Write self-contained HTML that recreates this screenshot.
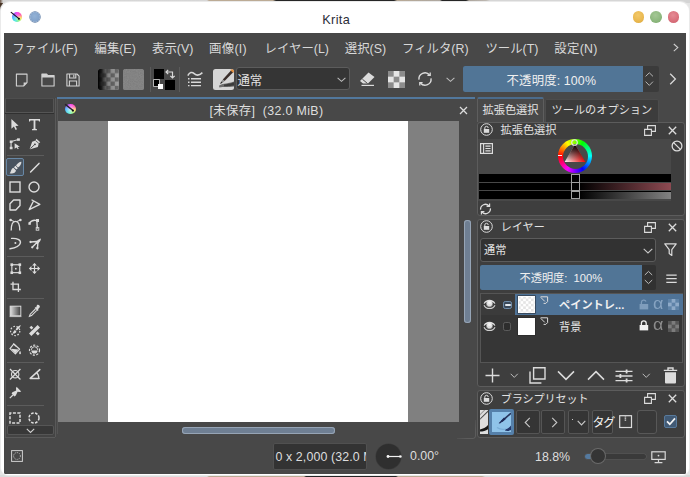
<!DOCTYPE html>
<html lang="ja">
<head>
<meta charset="utf-8">
<title>Krita</title>
<style>
html,body{margin:0;padding:0;}
body{width:690px;height:477px;overflow:hidden;background:#e4e4e4;font-family:"Liberation Sans","Noto Sans CJK JP",sans-serif;font-size:13px;color:#dcdcdc;}
#root{position:relative;width:690px;height:477px;overflow:hidden;}
.abs{position:absolute;}
.t{position:absolute;white-space:nowrap;line-height:16px;height:16px;}
svg{position:absolute;overflow:visible;}
#win{position:absolute;left:1.2px;top:2px;width:687.4px;height:473.4px;background:#fff;border-radius:9px 9px 7px 7px;box-shadow:0 0 .8px .4px #ececec;}
#app{position:absolute;left:4px;top:33px;width:682px;height:440.7px;background:#484848;border-radius:0 0 1.5px 1.5px;}
.mi{top:40.5px;font-size:12.4px;color:#d8d8d8;}
.field{position:absolute;background:#353535;border:1px solid #5c5c5c;border-radius:3px;box-sizing:border-box;}
.blue{position:absolute;background:#517596;}
.panel{position:absolute;border:1px solid #5c5c5c;border-radius:3px;box-sizing:border-box;background:#3e3e3e;}
</style>
</head>
<body>
<div id="root">
<!-- background bleed strips -->
<div class="abs" style="left:0;top:0;width:690px;height:3px;background:linear-gradient(90deg,#6a5546 0,#d6d6d6 3px,#d4d4d4 207px,#b9a68f 209px,#b9a68f 273px,#161616 276px,#161616 394px,#b5a590 397px,#a9a29a 440px,#161616 442px,#161616 466px,#a8a097 469px,#b9b3ac 486px,#d4d4d4 490px,#d4d4d4 690px);"></div>
<div class="abs" style="left:0;top:3px;width:3px;height:10px;background:linear-gradient(180deg,#4a3526,#3a2a20 60%,#8a8078);"></div>
<div class="abs" style="left:0;top:475px;width:690px;height:2px;background:linear-gradient(90deg,#dcdcdc 0,#dcdcdc 207px,#b9a68f 209px,#b9a68f 304px,#161616 306px,#161616 396px,#b9a68f 398px,#b9a68f 482px,#d8d8d8 485px,#d8d8d8 690px);"></div>
<div class="abs" style="left:0;top:1.4px;width:690px;height:474.4px;background:#cdcdcd;border-radius:10px 10px 8px 8px;"></div>
<div id="win"></div>

<!-- title bar -->
<div class="abs" style="left:11.8px;top:12px;width:10px;height:10px;border-radius:50%;background:radial-gradient(circle at 50% 55%,rgba(255,255,255,.45) 0,rgba(255,255,255,0) 70%),conic-gradient(from 0deg,#f838f0 0,#ff5aa8 60deg,#ffe35a 105deg,#8cf06a 150deg,#3fe8d8 200deg,#3fb4ff 265deg,#8a5cf0 315deg,#f838f0 360deg);"></div>
<svg style="left:10px;top:11px" width="12" height="10" viewBox="0 0 12 10"><path d="M1.2 1.4 L8.6 7.4" stroke="#1a1424" stroke-width="1.2" stroke-linecap="round"/><circle cx="8.9" cy="7.8" r="1.05" fill="#0c0c14"/></svg>
<div class="abs" style="left:29.6px;top:11.7px;width:10.4px;height:10.4px;border-radius:50%;background:radial-gradient(circle at 45% 40%,#93b2d6 0,#85a5cc 55%,#7494bd 100%);box-shadow:0 0 0 .7px #5f7ea6;"></div>
<div class="t" style="left:322.2px;top:11.8px;font-size:12.7px;letter-spacing:.38px;color:#2a2d38;">Krita</div>
<div class="abs" style="left:632.7px;top:11.2px;width:11.6px;height:11.6px;border-radius:50%;background:radial-gradient(circle at 45% 35%,#f3c96a 0,#e9b84f 60%,#d9a53c 100%);"></div>
<div class="abs" style="left:650.2px;top:11.2px;width:11.6px;height:11.6px;border-radius:50%;background:radial-gradient(circle at 45% 35%,#a5c795 0,#8cb77d 60%,#78a66a 100%);"></div>
<div class="abs" style="left:667.7px;top:11.2px;width:11.6px;height:11.6px;border-radius:50%;background:radial-gradient(circle at 45% 35%,#e58b95 0,#d96f7b 60%,#c95d69 100%);"></div>

<div id="app"></div>

<!-- menu bar -->
<div class="t mi" style="left:12.2px;">ファイル(F)</div>
<div class="t mi" style="left:94.6px;">編集(E)</div>
<div class="t mi" style="left:152px;">表示(V)</div>
<div class="t mi" style="left:209px;letter-spacing:.3px;">画像(I)</div>
<div class="t mi" style="left:264.6px;">レイヤー(L)</div>
<div class="t mi" style="left:344.8px;">選択(S)</div>
<div class="t mi" style="left:402px;">フィルタ(R)</div>
<div class="t mi" style="left:485.4px;">ツール(T)</div>
<div class="t mi" style="left:554.3px;letter-spacing:.3px;">設定(N)</div>
<svg style="left:672px;top:43px" width="8" height="10" viewBox="0 0 8 10"><path d="M1.8 1 L5.8 4.6 L1.8 8.2" fill="none" stroke="#cfcfcf" stroke-width="1.1"/></svg>

<!--TOOLBAR-->
<!-- new doc -->
<svg style="left:15px;top:72.5px" width="13" height="14" viewBox="0 0 13 14"><path d="M1.4 1.1 H12 V9.6 L8.6 13 H1.4 Z" fill="none" stroke="#d2d2d2" stroke-width="1.1" stroke-linejoin="round"/><path d="M12 9.6 H8.6 V13 Z" fill="#d2d2d2"/></svg>
<!-- open -->
<svg style="left:40.5px;top:72.5px" width="14" height="14" viewBox="0 0 14 14"><path d="M0.9 1 H5.6 L6.8 2.6 H13.1 V13 H0.9 Z" fill="none" stroke="#d2d2d2" stroke-width="1.1" stroke-linejoin="round"/><path d="M0.9 1 H5.6 L6.8 2.6 H13.1 V4.6 H0.9 Z" fill="#d2d2d2"/></svg>
<!-- save -->
<svg style="left:65.7px;top:72.5px" width="14" height="14" viewBox="0 0 14 14"><path d="M0.9 1 H11 L13.1 3.2 V13 H0.9 Z" fill="none" stroke="#d2d2d2" stroke-width="1.1" stroke-linejoin="round"/><path d="M3.6 1 V5 H9.8 V1 M7.8 1.8 V4.2" fill="none" stroke="#d2d2d2" stroke-width="1.1"/><path d="M3.4 13 V8 H10.6 V13" fill="none" stroke="#d2d2d2" stroke-width="1.1"/></svg>
<!-- gradient swatch -->
<div class="abs" style="left:98px;top:69px;width:21px;height:21px;border-radius:2px;overflow:hidden;background:#8a8a8a;">
  <svg style="left:0;top:0" width="21" height="21" viewBox="0 0 21 21"><defs><pattern id="chk" width="8.4" height="8.4" patternUnits="userSpaceOnUse"><rect width="8.4" height="8.4" fill="#a2a2a2"/><rect width="4.2" height="4.2" fill="#6c6c6c"/><rect x="4.2" y="4.2" width="4.2" height="4.2" fill="#6c6c6c"/></pattern><linearGradient id="gb" x1="0" x2="1"><stop offset="0" stop-color="#000" stop-opacity="1"/><stop offset=".18" stop-color="#000" stop-opacity=".75"/><stop offset=".5" stop-color="#000" stop-opacity=".2"/><stop offset="1" stop-color="#000" stop-opacity="0"/></linearGradient></defs><rect width="21" height="21" fill="url(#chk)"/><rect width="21" height="21" fill="url(#gb)"/></svg>
</div>
<!-- pattern swatch -->
<div class="abs" style="left:123px;top:69px;width:21px;height:21px;border-radius:2.5px;background:#808080;overflow:hidden;"><svg style="left:0;top:0" width="21" height="21"><filter id="nz"><feTurbulence type="fractalNoise" baseFrequency="0.9" numOctaves="2" seed="3"/><feColorMatrix type="matrix" values="0 0 0 0 0.5  0 0 0 0 0.5  0 0 0 0 0.5  0.6 0.6 0 0 -0.35"/></filter><rect width="21" height="21" fill="#7e7e7e"/><rect width="21" height="21" filter="url(#nz)" opacity=".35"/></svg></div>
<div class="abs" style="left:150px;top:67px;width:1px;height:25px;background:#5a5a5a;"></div>
<!-- fg/bg -->
<div class="abs" style="left:154px;top:69px;width:10px;height:10px;background:#000;"></div>
<div class="abs" style="left:165px;top:80px;width:10px;height:10px;background:#000;"></div>
<div class="abs" style="left:154px;top:80.4px;width:5.4px;height:5.4px;background:#000;box-shadow:0 0 0 .8px #cfcfcf;"></div>
<div class="abs" style="left:157.5px;top:83.5px;width:5.5px;height:5.5px;background:#fff;"></div>
<svg style="left:165px;top:69px" width="10" height="10" viewBox="0 0 10 10"><path d="M1 3 H7.5 V9 M3.2 0.8 L1 3 L3.2 5.2 M5.3 6.8 L7.5 9 L9.7 6.8" fill="none" stroke="#d8d8d8" stroke-width="1.2"/></svg>
<div class="abs" style="left:178.5px;top:67px;width:1px;height:25px;background:#5a5a5a;"></div>
<!-- brush settings -->
<svg style="left:187px;top:70px" width="17" height="18" viewBox="0 0 17 18"><path d="M0.8 5.6 C2.6 2.2 5 1.6 7.2 3.6 S11.6 6.4 15.4 2.6" fill="none" stroke="#d8d8d8" stroke-width="1.5"/><path d="M4 8.8 H14 M4 12.2 H14 M4 15.6 H14" stroke="#d8d8d8" stroke-width="1.4"/><path d="M1 8.8 H2.5 M1 12.2 H2.5 M1 15.6 H2.5" stroke="#d8d8d8" stroke-width="1.4"/></svg>
<!-- brush preset -->
<div class="abs" style="left:213px;top:69px;width:21px;height:21px;border-radius:2.5px;background:#d6d6d6;overflow:hidden;">
  <svg style="left:0;top:0" width="21" height="21" viewBox="0 0 21 21"><path d="M6 16.8 C9 14.4 12 15.6 21 12.6 L21 17.4 C15 18.6 10 17.4 6.4 18.6 Z" fill="#6e6e6e"/><path d="M11 15.4 C14 15.2 17 14.6 21 13.2 L21 16.6 C17 17.4 14 17.2 11 17.2 Z" fill="#3c3c3c"/><path d="M18.2 1.2 L20.4 3 L11.6 12 L9.8 10.4 Z" fill="#3a2e2a"/><path d="M17.6 0.6 L21 0 L20.8 3.6 L19.8 3.6 L17.8 1.8 Z" fill="#e08c3c"/><path d="M9.8 10.4 L11.6 12 L9.6 13.8 L8.2 12.6 Z" fill="#8a8a8a"/><path d="M8.2 12.6 L9.6 13.8 L7 15 Z" fill="#2a2a2a"/></svg>
</div>
<div class="field" style="left:236.4px;top:67.2px;width:114px;height:23.2px;"></div>
<div class="t" style="left:237.4px;top:72.7px;font-size:12.4px;color:#e2e2e2;">通常</div>
<svg style="left:337.3px;top:76.9px" width="9" height="6" viewBox="0 0 9 6"><path d="M0.6 0.8 L4.5 4.4 L8.4 0.8" fill="none" stroke="#bcbcbc" stroke-width="1.05"/></svg>
<!-- eraser -->
<svg style="left:359px;top:71px" width="17" height="16" viewBox="0 0 17 16"><path d="M1 10 L9.5 1.5 L15.5 6 L9 12.5 H4 Z" fill="#dcdcdc"/><path d="M2.5 14.4 H15" stroke="#dcdcdc" stroke-width="1.2"/><path d="M3.4 8.2 L8.6 12.6" stroke="#484848" stroke-width="1"/></svg>
<!-- alpha checker -->
<svg style="left:388px;top:71px" width="17" height="17" viewBox="0 0 17 17"><rect width="17" height="17" fill="#e6e6e6"/><g fill="#8c8c8c"><rect x="0" y="0" width="5.67" height="5.67"/><rect x="11.33" y="0" width="5.67" height="5.67"/><rect x="5.67" y="5.67" width="5.67" height="5.67"/><rect x="0" y="11.33" width="5.67" height="5.67"/><rect x="11.33" y="11.33" width="5.67" height="5.67"/></g></svg>
<!-- reload -->
<svg style="left:417px;top:71px" width="16" height="16" viewBox="0 0 16 16"><path d="M2 8.6 A6 6 0 0 1 12.6 4" fill="none" stroke="#dadada" stroke-width="1.4"/><path d="M14 7.4 A6 6 0 0 1 3.4 12" fill="none" stroke="#dadada" stroke-width="1.4"/><path d="M10.4 4.4 H13.2 V1.6" fill="none" stroke="#dadada" stroke-width="1.3"/><path d="M5.6 11.6 H2.8 V14.4" fill="none" stroke="#dadada" stroke-width="1.3"/></svg>
<svg style="left:446.3px;top:76.9px" width="9" height="6" viewBox="0 0 9 6"><path d="M0.6 0.8 L4.5 4.4 L8.4 0.8" fill="none" stroke="#bcbcbc" stroke-width="1.05"/></svg>
<!-- opacity slider -->
<div class="abs" style="left:463.3px;top:66px;width:195.4px;height:25.7px;background:#3b3b3b;border-radius:2px;"></div>
<div class="blue" style="left:463.3px;top:66px;width:180px;height:25.7px;border-radius:2px 0 0 2px;"></div>
<div class="t" style="left:506.6px;top:72.5px;font-size:12.4px;letter-spacing:.13px;color:#f0f0f0;">不透明度: 100%</div>
<svg style="left:644.8px;top:71px" width="9" height="17" viewBox="0 0 9 17"><path d="M0.6 5.4 L4.3 1.8 L8 5.4 M0.6 10.6 L4.3 14.4 L8 10.6" fill="none" stroke="#b4b4b4" stroke-width="1"/></svg>
<svg style="left:669px;top:73.2px" width="8" height="12" viewBox="0 0 8 12"><path d="M1.2 0.8 L6.4 6 L1.2 11.2" fill="none" stroke="#d8d8d8" stroke-width="1.3"/></svg>

<!--TOOLBOX-->
<div class="abs" style="left:5px;top:98px;width:50px;height:339px;background:#444;border-left:1px solid #585858;box-sizing:border-box;"></div>
<div class="abs" style="left:5px;top:98.4px;width:49px;height:15px;background:#3d3d3d;border:1px solid #555;border-top-color:#4e4e4e;box-sizing:border-box;border-radius:1px;"></div>
<div class="abs" style="left:5px;top:113px;width:49px;height:1px;background:#303030;"></div>
<div class="abs" style="left:54.5px;top:98px;width:1px;height:339px;background:#595959;"></div>
<div class="abs" style="left:5px;top:436.6px;width:50px;height:1px;background:#5a5a5a;"></div>
<svg style="left:9px;top:118px" width="12" height="13" viewBox="0 0 12 13"><path d="M2.4 1 L2.4 10.8 L4.9 8.6 L6.6 12 L8 11.3 L6.4 8 L9.6 7.8 Z" fill="#dcdcdc"/></svg>
<svg style="left:28px;top:118px" width="13" height="13" viewBox="0 0 13 13"><path d="M1 1 H12 V3.6 H11 L10.6 2.4 H7.4 V10.8 L9 11.2 V12.2 H4 V11.2 L5.6 10.8 V2.4 H2.4 L2 3.6 H1 Z" fill="#dcdcdc"/></svg>
<svg style="left:9.2px;top:137.6px" width="12.2" height="11.6" viewBox="0 0 13 14" preserveAspectRatio="none"><path d="M2.2 12 V4.4 L10 1.8" fill="none" stroke="#dcdcdc" stroke-width="1.2"/><rect x="0.8" y="10.6" width="3" height="3" fill="#dcdcdc"/><rect x="0.8" y="3" width="3" height="3" fill="#dcdcdc"/><rect x="8.6" y="0.4" width="3" height="3" fill="#dcdcdc"/><path d="M6 6.4 L6 13 L8 11.4 L9.4 13.6 L10.4 13 L9.2 10.8 L11.6 10.6 Z" fill="#dcdcdc"/></svg>
<svg style="left:28.6px;top:137.8px" width="12" height="12" viewBox="0 0 13 14" preserveAspectRatio="none"><path d="M8 0.8 L12.2 5 L10.6 6.2 L9.6 10.4 L1.2 13 L0.8 12.6 L3.4 4.4 L7 3 Z" fill="#dcdcdc"/><path d="M1.4 12.4 L6 7.8" stroke="#484848" stroke-width="1"/><circle cx="6.4" cy="7.4" r="1.1" fill="#484848"/><path d="M7 3 L10.6 6.2" stroke="#484848" stroke-width=".9"/></svg>
<div class="abs" style="left:7px;top:155px;width:37px;height:1px;background:#5c5c5c;"></div>
<div class="abs" style="left:6px;top:158px;width:18px;height:18px;background:#48535f;border:1px solid #6888a6;border-radius:2px;box-sizing:border-box;"></div>
<svg style="left:9px;top:161px" width="13" height="13" viewBox="0 0 13 13"><path d="M12.4 0.8 C10.4 0.8 8 2.8 7 4.6 L9 6.6 C11 5.4 12.6 2.8 12.4 0.8 Z" fill="#dcdcdc"/><path d="M6.4 4.8 L8.8 7.2 L7.4 8.6 L5 6.2 Z" fill="#e8e8e8"/><path d="M4.4 6.8 L7 9.4 C6.6 12 3.8 13 0.6 12.2 C2.4 11 1.6 8 4.4 6.8 Z" fill="#dcdcdc"/></svg>
<svg style="left:28px;top:161px" width="13" height="13" viewBox="0 0 13 13"><path d="M2.6 11 L11 2.4" stroke="#dcdcdc" stroke-width="1.5" stroke-linecap="round"/></svg>
<svg style="left:9px;top:180.7px" width="12" height="12" viewBox="0 0 12 12"><rect x="1" y="1" width="10" height="10" fill="none" stroke="#dcdcdc" stroke-width="1.4"/></svg>
<svg style="left:28px;top:180.5px" width="12" height="12" viewBox="0 0 12 12"><circle cx="6" cy="6" r="5" fill="none" stroke="#dcdcdc" stroke-width="1.4"/></svg>
<svg style="left:9px;top:199px" width="12" height="12" viewBox="0 0 12 12"><path d="M4.6 1 H11 V6.6 L6.8 11 H1 V4.8 Z" fill="none" stroke="#dcdcdc" stroke-width="1.4" stroke-linejoin="round"/></svg>
<svg style="left:28px;top:199px" width="13" height="12" viewBox="0 0 13 12"><path d="M4 1 L11.8 5.4 L1.2 10.6 L5 3" fill="none" stroke="#dcdcdc" stroke-width="1.4" stroke-linejoin="round" stroke-linecap="round"/></svg>
<svg style="left:9px;top:218px" width="13" height="13" viewBox="0 0 13 13"><path d="M2.2 12.4 C2.2 6 4 3.4 6.5 3.4 S10.8 6 10.8 12.4" fill="none" stroke="#dcdcdc" stroke-width="1.4"/><path d="M2 2.2 L5.4 3.6 M11 2.2 L7.6 3.6" stroke="#dcdcdc" stroke-width="1"/><circle cx="1.6" cy="2" r="1.3" fill="#dcdcdc"/><circle cx="11.4" cy="2" r="1.3" fill="#dcdcdc"/></svg>
<svg style="left:28px;top:218px" width="13" height="13" viewBox="0 0 13 13"><path d="M1.2 5.4 C3 2.6 6.4 1.8 9.2 2.6 C8.6 5 9.2 7.6 9.4 10.6" fill="none" stroke="#dcdcdc" stroke-width="1.4"/><rect x="8" y="1" width="3" height="3" fill="#dcdcdc"/><rect x="8.2" y="9.6" width="2.6" height="2.6" fill="none" stroke="#dcdcdc" stroke-width=".9"/><rect x="0.4" y="4.4" width="2.4" height="2.4" fill="#dcdcdc"/></svg>
<svg style="left:9px;top:237px" width="13" height="13" viewBox="0 0 13 13"><path d="M2.6 1.4 C8 1 12 3 11.4 5.8 C10.8 8.8 6 11 1 11.8" fill="none" stroke="#dcdcdc" stroke-width="1.4" stroke-linecap="round"/><circle cx="6.4" cy="6" r="1" fill="#dcdcdc"/></svg>
<svg style="left:28.6px;top:238.4px" width="12.4" height="11.4" viewBox="0 0 13 12"><path d="M12.6 0.4 C10.6 0.6 8.4 2.4 7.4 4.2 L9 5.8 C10.8 4.8 12.6 2.6 12.6 0.4 Z" fill="#dcdcdc"/><path d="M8 3.6 L1.6 4.2 M8.6 4.4 L3.6 9.6 M9.4 5 L8.8 11" stroke="#dcdcdc" stroke-width="1.5" stroke-linecap="round"/><circle cx="1.6" cy="4.2" r="1.2" fill="#dcdcdc"/><circle cx="3.4" cy="9.8" r="1.2" fill="#dcdcdc"/><circle cx="8.8" cy="10.8" r="1.2" fill="#dcdcdc"/></svg>
<div class="abs" style="left:7px;top:256px;width:37px;height:1px;background:#5c5c5c;"></div>
<svg style="left:9.5px;top:262.8px" width="11.6" height="11.4" viewBox="0 0 13 13"><rect x="2" y="2" width="9" height="9" fill="none" stroke="#dcdcdc" stroke-width="1.3"/><g fill="#dcdcdc"><rect x="0.4" y="0.4" width="3" height="3"/><rect x="9.6" y="0.4" width="3" height="3"/><rect x="0.4" y="9.6" width="3" height="3"/><rect x="9.6" y="9.6" width="3" height="3"/><rect x="5.6" y="5.6" width="1.8" height="1.8"/></g></svg>
<svg style="left:28.8px;top:263.4px" width="11" height="11" viewBox="0 0 13 13"><path d="M6.5 1 V12 M1 6.5 H12" stroke="#dcdcdc" stroke-width="1.4"/><path d="M4.4 3 L6.5 0.8 L8.6 3 M4.4 10 L6.5 12.2 L8.6 10 M3 4.4 L0.8 6.5 L3 8.6 M10 4.4 L12.2 6.5 L10 8.6" fill="none" stroke="#dcdcdc" stroke-width="1.3"/></svg>
<svg style="left:9.8px;top:281.2px" width="11.4" height="11.6" viewBox="0 0 13 13"><path d="M3.4 0.6 V9.6 H12.4 M0.6 3.4 H9.6 V12.4" fill="none" stroke="#dcdcdc" stroke-width="1.5"/></svg>
<div class="abs" style="left:7px;top:298px;width:37px;height:1px;background:#5c5c5c;"></div>
<svg style="left:9px;top:305px" width="13" height="12" viewBox="0 0 13 12"><defs><linearGradient id="tg" x1="0" x2="1"><stop offset="0" stop-color="#e0e0e0"/><stop offset="1" stop-color="#3c3c3c"/></linearGradient></defs><rect x="1.2" y="1.2" width="10.6" height="9.6" fill="url(#tg)" stroke="#dcdcdc" stroke-width="1"/><path d="M0.6 11.6 H12.4" stroke="#dcdcdc" stroke-width=".8"/></svg>
<svg style="left:28px;top:304px" width="13" height="14" viewBox="0 0 13 14"><path d="M9 1 C10.4 -0.2 12.8 2 11.6 3.6 L10 5.2 L10.6 6 L9.6 7 L6.6 4 L7.6 3 L8.2 3.4 Z" fill="#dcdcdc"/><path d="M7.4 5 L2.2 10.2 L1.4 12.4 L3.6 11.6 L8.8 6.4" fill="none" stroke="#dcdcdc" stroke-width="1.1"/></svg>
<svg style="left:9px;top:323.7px" width="13" height="13" viewBox="0 0 13 13"><circle cx="6.2" cy="7" r="4.6" fill="none" stroke="#dcdcdc" stroke-width="1.2" stroke-dasharray="1.6 1.6"/><path d="M11.8 1 C9.8 1.6 7.6 3.6 6.6 5.4 L7.8 6.6 C9.6 5 11.4 3 11.8 1 Z" fill="#dcdcdc"/><path d="M6 6 L7.4 7.4 C7 9 5.4 9.8 3.2 9.4 C4.4 8.8 4.4 7 6 6 Z" fill="#dcdcdc"/></svg>
<svg style="left:28px;top:323.8px" width="13" height="13" viewBox="0 0 13 13"><path d="M2.2 10.8 L10.8 2.2" stroke="#dcdcdc" stroke-width="3.4"/><path d="M2.4 2.6 L4.4 4.6 M8.6 8.4 L10.8 10.6" stroke="#dcdcdc" stroke-width="2.6"/></svg>
<svg style="left:9.4px;top:343.4px" width="12.6" height="12.6" viewBox="0 0 13 13"><path d="M5 1 L11 6.4 L6.6 11.2 L1 5.8 Z" fill="none" stroke="#dcdcdc" stroke-width="1.2" stroke-linejoin="round"/><path d="M2 6 L9.8 6.6 L6.6 10.6 Z" fill="#dcdcdc"/><path d="M4.4 0.6 L7.4 3.4" stroke="#dcdcdc" stroke-width="1.1"/><path d="M11.4 8 C12.6 10 12.6 11.6 11.4 11.6 S10.2 10 11.4 8 Z" fill="#dcdcdc"/></svg>
<svg style="left:28.4px;top:342.6px" width="13" height="14" viewBox="0 0 13 14"><circle cx="6.5" cy="7.2" r="5" fill="none" stroke="#dcdcdc" stroke-width="1.2" stroke-dasharray="2.2 1.4"/><path d="M3.4 7.4 A3.1 3.1 0 0 0 9.6 7.4 Z" fill="#dcdcdc"/><path d="M3.4 6.8 A3.1 3.1 0 0 1 9.6 6.8" fill="none" stroke="#dcdcdc" stroke-width="1"/></svg>
<div class="abs" style="left:7px;top:362px;width:37px;height:1px;background:#5c5c5c;"></div>
<svg style="left:9.4px;top:367.6px" width="12.4" height="12.4" viewBox="0 0 13 13"><path d="M1 1 L12 12 M12 1 L1 12" stroke="#dcdcdc" stroke-width="1.3"/><circle cx="6.5" cy="6.5" r="3.9" fill="none" stroke="#dcdcdc" stroke-width="1.2"/></svg>
<svg style="left:28.6px;top:368.4px" width="12" height="12" viewBox="0 0 12 12"><path d="M1.2 10.4 H10 M1.2 10.4 L10.8 1.6" stroke="#dcdcdc" stroke-width="1.5" stroke-linecap="round"/><path d="M9.8 10.4 C9.8 8 9 5.6 7.4 4.6" fill="none" stroke="#dcdcdc" stroke-width="1.3"/></svg>
<svg style="left:9px;top:386px" width="13" height="13" viewBox="0 0 13 13"><path d="M7.6 0.8 L12.2 5.4 L10.8 6 L8.6 5.8 L6.8 9.6 L5.4 10.4 L2.6 7.6 L3.4 6.2 L7.2 4.4 L7 2.2 Z" fill="#dcdcdc"/><path d="M4 9 L0.8 12.2" stroke="#dcdcdc" stroke-width="1.2"/></svg>
<div class="abs" style="left:7px;top:405px;width:37px;height:1px;background:#5c5c5c;"></div>
<svg style="left:9px;top:411.6px" width="12" height="12" viewBox="0 0 12 12"><rect x="1" y="1" width="10" height="10" fill="none" stroke="#dcdcdc" stroke-width="1.5" stroke-dasharray="3 1.4" stroke-dashoffset="1.5"/></svg>
<svg style="left:28px;top:411.6px" width="12" height="12" viewBox="0 0 12 12"><circle cx="6" cy="6" r="5" fill="none" stroke="#dcdcdc" stroke-width="1.5" stroke-dasharray="2.6 1.4"/></svg>
<div class="abs" style="left:7px;top:425.2px;width:47px;height:10px;background:#383838;border:1px solid #565656;border-radius:2px;box-sizing:border-box;"></div>
<svg style="left:26px;top:427.6px" width="9" height="6" viewBox="0 0 9 6"><path d="M0.8 0.8 L4.5 4.4 L8.2 0.8" fill="none" stroke="#d0d0d0" stroke-width="1.1"/></svg>

<!--CANVAS-->
<div class="abs" style="left:57.4px;top:97.1px;width:418px;height:2px;background:#52789d;"></div>
<div class="abs" style="left:57px;top:99px;width:418px;height:22px;background:#484848;"></div>
<div class="abs" style="left:57px;top:99px;width:1px;height:335px;background:#555;"></div>
<div class="abs" style="left:65px;top:103.5px;width:10.6px;height:10.6px;border-radius:50%;background:radial-gradient(circle at 50% 55%,rgba(255,255,255,.7) 0,rgba(255,255,255,0) 75%),conic-gradient(from 0deg,#f838f0 0,#ff5aa8 60deg,#ffe35a 105deg,#8cf06a 150deg,#3fe8d8 200deg,#3fb4ff 265deg,#8a5cf0 315deg,#f838f0 360deg);"></div>
<svg style="left:63.5px;top:102.5px" width="12" height="10" viewBox="0 0 12 10"><path d="M1.6 1.6 L8.4 7" stroke="#2a2030" stroke-width="1.5" stroke-linecap="round"/><circle cx="8.9" cy="7.6" r="1.1" fill="#0c0c14"/></svg>
<div class="t" style="left:209.5px;top:103px;font-size:12.4px;color:#dedede;white-space:pre;letter-spacing:.34px;">[未保存]  (32.0 MiB)</div>
<svg style="left:458.5px;top:105.5px" width="9" height="9" viewBox="0 0 9 9"><path d="M1 1 L8 8 M8 1 L1 8" stroke="#dcdcdc" stroke-width="1.3"/></svg>
<div class="abs" style="left:58px;top:121px;width:401px;height:301px;background:#808080;"></div>
<div class="abs" style="left:108px;top:121px;width:300px;height:301px;background:#fff;"></div>
<div class="abs" style="left:181.5px;top:427.2px;width:153.6px;height:6.4px;border-radius:3.2px;background:#6f7f93;box-shadow:inset 0 0 0 1px #96a4b5;"></div>
<div class="abs" style="left:464.4px;top:220px;width:6.4px;height:103px;border-radius:3.2px;background:#6f7f93;box-shadow:inset 0 0 0 1px #96a4b5;"></div>

<!--DOCK-->
<div class="abs" style="left:477px;top:97px;width:67.4px;height:25px;background:#494949;border:1px solid #5e5e5e;border-top:2px solid #4b6b8b;border-bottom:none;border-radius:2px 2px 0 0;box-sizing:border-box;"></div>
<div class="t" style="left:482.5px;top:102px;font-size:11.2px;color:#e2e2e2;">拡張色選択</div>
<div class="abs" style="left:545px;top:99px;width:114px;height:23px;background:#3c3c3c;border:1px solid #4c4c4c;border-bottom:none;border-radius:2px 2px 0 0;box-sizing:border-box;"></div>
<div class="t" style="left:551.5px;top:102px;font-size:11.2px;color:#e2e2e2;">ツールのオプション</div>
<div class="panel" style="left:477px;top:122px;width:207.6px;height:94px;"></div>
<div class="abs" style="left:478px;top:138.6px;width:193px;height:62.6px;background:#484848;"></div>
<svg style="left:479.5px;top:123.0px" width="13" height="13" viewBox="0 0 13 13"><circle cx="6.5" cy="6.5" r="5.8" fill="none" stroke="#dcdcdc" stroke-width="1"/><rect x="3.8" y="6" width="5.4" height="3.8" fill="#dcdcdc"/><path d="M4.8 6 V5 A1.7 1.7 0 0 1 8.2 5" fill="none" stroke="#dcdcdc" stroke-width="1"/></svg>
<div class="t" style="left:500.5px;top:122px;font-size:11.2px;color:#e2e2e2;">拡張色選択</div>
<svg style="left:644px;top:124.5px" width="12" height="11" viewBox="0 0 12 11"><path d="M3.6 0.6 H11.4 V6.4 H3.6 Z" fill="none" stroke="#dcdcdc" stroke-width="1.1"/><path d="M0.6 4.4 H7.4 V10.4 H0.6 Z" fill="#3e3e3e" stroke="#dcdcdc" stroke-width="1.1"/></svg>
<svg style="left:668px;top:125.5px" width="9" height="9" viewBox="0 0 9 9"><path d="M0.8 0.8 L8.2 8.2 M8.2 0.8 L0.8 8.2" stroke="#dcdcdc" stroke-width="1.3"/></svg>
<svg style="left:480px;top:142.6px" width="13" height="11" viewBox="0 0 13 11"><rect x="0.6" y="0.6" width="11.8" height="9.8" fill="none" stroke="#dcdcdc" stroke-width="1.2"/><path d="M3.6 1 V10" stroke="#dcdcdc" stroke-width="1.1"/><path d="M5.4 3.1 H10.6 M5.4 5.5 H10.6 M5.4 7.9 H10.6" stroke="#dcdcdc" stroke-width="1.2"/></svg>
<svg style="left:671.4px;top:139.6px" width="12" height="12" viewBox="0 0 12 12"><circle cx="6" cy="6" r="4.9" fill="none" stroke="#dcdcdc" stroke-width="1.3"/><path d="M2.6 2.6 L9.4 9.4" stroke="#dcdcdc" stroke-width="1.3"/></svg>
<div class="abs" style="left:558.3px;top:139.3px;width:34px;height:34px;border-radius:50%;background:conic-gradient(from 270deg,#ff0000,#ffff00 60deg,#00ff00 120deg,#00ffff 180deg,#0000ff 240deg,#ff00ff 300deg,#ff0000 360deg);"></div>
<div class="abs" style="left:562.5px;top:143.5px;width:25.6px;height:25.6px;border-radius:50%;background:#484848;"></div>
<svg style="left:562.3px;top:143.3px" width="26" height="26" viewBox="0 0 26 26"><defs><linearGradient id="tr1" x1="0" y1="1" x2="1" y2="1"><stop offset="0" stop-color="#fff"/><stop offset="1" stop-color="#f00"/></linearGradient><linearGradient id="tr2" x1="0.5" y1="0" x2="0.5" y2="1"><stop offset="0" stop-color="#000" stop-opacity="1"/><stop offset=".25" stop-color="#000" stop-opacity=".8"/><stop offset="1" stop-color="#000" stop-opacity="0"/></linearGradient></defs><path d="M13 1.6 L23.4 18.9 L2.6 18.9 Z" fill="url(#tr1)"/><path d="M13 1.6 L23.4 18.9 L2.6 18.9 Z" fill="url(#tr2)"/></svg>
<svg style="left:571.4px;top:139.3px" width="7" height="7" viewBox="0 0 7 7"><circle cx="3.5" cy="3.5" r="2.8" fill="none" stroke="#e4e4e4" stroke-width="1.1"/></svg>
<div class="abs" style="left:558px;top:154.5px;width:4px;height:1.4px;background:#f0f0f0;"></div>
<div class="abs" style="left:478.5px;top:173.8px;width:192.5px;height:25.3px;background:#000;"></div>
<div class="abs" style="left:579px;top:183px;width:92px;height:8px;background:linear-gradient(90deg,#000,#8e4a52);"></div>
<div class="abs" style="left:579px;top:191.5px;width:92px;height:7.5px;background:linear-gradient(90deg,#000,#828282);"></div>
<div class="abs" style="left:478.5px;top:181.8px;width:192.5px;height:1px;background:#484848;"></div>
<div class="abs" style="left:478.5px;top:190.2px;width:192.5px;height:1px;background:#484848;"></div>
<div class="abs" style="left:571px;top:174px;width:8.6px;height:8.6px;border:1.3px solid #a0a0a0;box-sizing:border-box;"></div>
<div class="abs" style="left:571px;top:182.3px;width:8.6px;height:8.6px;border:1.3px solid #a0a0a0;box-sizing:border-box;"></div>
<div class="abs" style="left:571px;top:190.6px;width:8.6px;height:8.6px;border:1.3px solid #a0a0a0;box-sizing:border-box;"></div>
<svg style="left:479px;top:203px" width="13" height="12" viewBox="0 0 13 12"><path d="M1.6 6.6 A4.8 4.8 0 0 1 10 3" fill="none" stroke="#dcdcdc" stroke-width="1.3"/><path d="M11.4 5.4 A4.8 4.8 0 0 1 3 9" fill="none" stroke="#dcdcdc" stroke-width="1.3"/><path d="M7.6 3.4 H10.6 V0.4" fill="none" stroke="#dcdcdc" stroke-width="1.2"/><path d="M5.4 8.6 H2.4 V11.6" fill="none" stroke="#dcdcdc" stroke-width="1.2"/></svg>
<div class="panel" style="left:477px;top:219px;width:207.6px;height:168px;"></div>
<svg style="left:479.5px;top:220.0px" width="13" height="13" viewBox="0 0 13 13"><circle cx="6.5" cy="6.5" r="5.8" fill="none" stroke="#dcdcdc" stroke-width="1"/><rect x="3.8" y="6" width="5.4" height="3.8" fill="#dcdcdc"/><path d="M4.8 6 V5 A1.7 1.7 0 0 1 8.2 5" fill="none" stroke="#dcdcdc" stroke-width="1"/></svg>
<div class="t" style="left:500.7px;top:219px;font-size:11.1px;color:#e2e2e2;">レイヤー</div>
<svg style="left:644px;top:221.5px" width="12" height="11" viewBox="0 0 12 11"><path d="M3.6 0.6 H11.4 V6.4 H3.6 Z" fill="none" stroke="#dcdcdc" stroke-width="1.1"/><path d="M0.6 4.4 H7.4 V10.4 H0.6 Z" fill="#3e3e3e" stroke="#dcdcdc" stroke-width="1.1"/></svg>
<svg style="left:668px;top:222.5px" width="9" height="9" viewBox="0 0 9 9"><path d="M0.8 0.8 L8.2 8.2 M8.2 0.8 L0.8 8.2" stroke="#dcdcdc" stroke-width="1.3"/></svg>
<div class="field" style="left:480px;top:237.8px;width:176px;height:24.2px;background:#323232;"></div>
<div class="t" style="left:484px;top:242px;font-size:11.2px;color:#e2e2e2;">通常</div>
<svg style="left:643px;top:247.5px" width="10" height="6" viewBox="0 0 10 6"><path d="M0.7 0.8 L5.0 4.9 L9.3 0.8" fill="none" stroke="#c8c8c8" stroke-width="1.1"/></svg>
<svg style="left:664px;top:243px" width="13" height="14" viewBox="0 0 13 14"><path d="M0.8 0.8 H12.2 L7.8 6.6 V12.4 L5.2 10.6 V6.6 Z" fill="none" stroke="#dcdcdc" stroke-width="1.2" stroke-linejoin="round"/></svg>
<div class="abs" style="left:480px;top:265.2px;width:176px;height:24.6px;background:#313131;border-radius:2px;"></div>
<div class="blue" style="left:480px;top:265.2px;width:162px;height:24.6px;border-radius:2px 0 0 2px;"></div>
<div class="t" style="left:519.5px;top:269.5px;font-size:11.2px;white-space:pre;color:#f0f0f0;">不透明度:  100%</div>
<svg style="left:644px;top:270px" width="9" height="15" viewBox="0 0 9 15"><path d="M0.8 5 L4.5 1.4 L8.2 5 M0.8 10 L4.5 13.6 L8.2 10" fill="none" stroke="#bdbdbd" stroke-width="1"/></svg>
<svg style="left:665.6px;top:274px" width="11" height="10" viewBox="0 0 11 10"><path d="M0.3 1 H10.7 M0.3 4.7 H10.7 M0.3 8.4 H10.7" stroke="#dcdcdc" stroke-width="1.25"/></svg>
<div class="abs" style="left:480px;top:293px;width:203px;height:70px;background:#363636;border:1px solid #555;box-sizing:border-box;"></div>
<div class="abs" style="left:480.5px;top:293.6px;width:34.6px;height:21.4px;background:#3b3b3b;"></div>
<div class="blue" style="left:515px;top:293.5px;width:168px;height:21.5px;background:#4f7397;"></div>
<svg style="left:482.8px;top:298.4px" width="13" height="12" viewBox="0 0 13 12"><path d="M0.6 5.4 C2.6 0.6 10.4 0.6 12.4 5.4 L11.4 5.8 C9.6 2.4 3.4 2.4 1.6 5.8 Z" fill="#e4e4e4"/><path d="M1 7.2 C3 11.6 10 11.6 12 7.2" fill="none" stroke="#cfcfcf" stroke-width="1.1"/><circle cx="6.5" cy="5.6" r="3.1" fill="#e0e0e0"/><circle cx="6.5" cy="4.6" r="1.5" fill="#f4f4f4"/><path d="M3.6 7 A3.2 3.2 0 0 0 9.4 7" fill="none" stroke="#9a9a9a" stroke-width=".9"/></svg>
<svg style="left:482.8px;top:320px" width="13" height="12" viewBox="0 0 13 12"><path d="M0.6 5.4 C2.6 0.6 10.4 0.6 12.4 5.4 L11.4 5.8 C9.6 2.4 3.4 2.4 1.6 5.8 Z" fill="#e4e4e4"/><path d="M1 7.2 C3 11.6 10 11.6 12 7.2" fill="none" stroke="#cfcfcf" stroke-width="1.1"/><circle cx="6.5" cy="5.6" r="3.1" fill="#e0e0e0"/><circle cx="6.5" cy="4.6" r="1.5" fill="#f4f4f4"/><path d="M3.6 7 A3.2 3.2 0 0 0 9.4 7" fill="none" stroke="#9a9a9a" stroke-width=".9"/></svg>
<div class="abs" style="left:502.5px;top:300.8px;width:9px;height:8.4px;border:1px solid #6f8dab;border-radius:2.2px;box-sizing:border-box;background:#3b4959;"></div><div class="abs" style="left:504.8px;top:304px;width:6.2px;height:2.2px;border-radius:1px;background:#e6ebf0;"></div>
<div class="abs" style="left:502.6px;top:322.3px;width:8.6px;height:8.6px;border:1px solid #5c5c5c;border-radius:2.2px;box-sizing:border-box;background:#2d2d2d;"></div>
<div class="abs" style="left:518px;top:296px;width:17.4px;height:17.4px;background:#fff;box-shadow:0 0 0 .7px #2e3a48;overflow:hidden;"><svg style="left:0;top:0" width="18" height="18"><defs><pattern id="chk2" width="5.2" height="5.2" patternUnits="userSpaceOnUse"><rect width="5.2" height="5.2" fill="#fff"/><rect width="2.6" height="2.6" fill="#e4e4e4"/><rect x="2.6" y="2.6" width="2.6" height="2.6" fill="#e4e4e4"/></pattern></defs><rect x="0.9" y="0.9" width="15.6" height="15.6" fill="url(#chk2)"/></svg></div>
<div class="abs" style="left:518px;top:317.8px;width:17.4px;height:17.4px;background:#fff;box-shadow:0 0 0 .7px #2a2a2a;"></div>
<svg style="left:540px;top:295.5px" width="10" height="9" viewBox="0 0 10 9"><path d="M0.6 0.8 H7.6 V5.6 L5.8 7.4 H3.6" fill="none" stroke="#dcdcdc" stroke-width="1"/><path d="M0.8 1.4 L4.8 5.4" stroke="#dcdcdc" stroke-width="1"/></svg>
<svg style="left:540px;top:317px" width="10" height="9" viewBox="0 0 10 9"><path d="M0.6 0.8 H7.6 V5.6 L5.8 7.4 H3.6" fill="none" stroke="#dcdcdc" stroke-width="1"/><path d="M0.8 1.4 L4.8 5.4" stroke="#dcdcdc" stroke-width="1"/></svg>
<div class="t" style="left:559px;top:297px;font-size:11.2px;font-weight:bold;color:#f0f0f0;">ペイントレ...</div>
<div class="t" style="left:559px;top:318.5px;font-size:11.2px;color:#e6e6e6;">背景</div>
<svg style="left:638.5px;top:298.5px" width="10" height="11" viewBox="0 0 10 11"><rect x="0.6" y="5" width="8.6" height="5.4" fill="#7f9dbc"/><path d="M2.4 5 V3.6 A2.4 2.4 0 0 1 7 2.6" fill="none" stroke="#7f9dbc" stroke-width="1.3"/></svg>
<svg style="left:638.5px;top:320px" width="10" height="11" viewBox="0 0 10 11"><rect x="0.6" y="5" width="8.6" height="5.4" fill="#f0f0f0"/><path d="M2.4 5 V3.2 A2.4 2.4 0 0 1 7.2 3.2 V5" fill="none" stroke="#f0f0f0" stroke-width="1.3"/></svg>
<div class="t" style="left:652.5px;top:295.5px;font-size:16px;color:#86a3c1;transform:scaleX(1.12);transform-origin:0 50%;">α</div>
<div class="t" style="left:652.5px;top:317px;font-size:16px;color:#8c8c8c;transform:scaleX(1.12);transform-origin:0 50%;">α</div>
<svg style="left:667.5px;top:299px" width="11" height="11" viewBox="0 0 11 11"><rect width="11" height="11" fill="#5f83a8"/><g fill="#8eaac8"><rect x="3.67" y="0" width="3.67" height="3.67"/><rect x="0" y="3.67" width="3.67" height="3.67"/><rect x="7.33" y="3.67" width="3.67" height="3.67"/><rect x="3.67" y="7.33" width="3.67" height="3.67"/></g></svg>
<svg style="left:667.5px;top:320.5px" width="11" height="11" viewBox="0 0 11 11"><rect width="11" height="11" fill="#565656"/><g fill="#7c7c7c"><rect x="3.67" y="0" width="3.67" height="3.67"/><rect x="0" y="3.67" width="3.67" height="3.67"/><rect x="7.33" y="3.67" width="3.67" height="3.67"/><rect x="3.67" y="7.33" width="3.67" height="3.67"/></g></svg>
<svg style="left:485px;top:367.5px" width="15" height="15" viewBox="0 0 15 15"><path d="M7.5 0.5 V14.5 M0.5 7.5 H14.5" stroke="#dcdcdc" stroke-width="1.4"/></svg>
<svg style="left:510px;top:372.5px" width="8.5" height="5.5" viewBox="0 0 8.5 5.5"><path d="M0.7 0.8 L4.25 4.4 L7.8 0.8" fill="none" stroke="#bdbdbd" stroke-width="1"/></svg>
<svg style="left:529px;top:367px" width="17" height="17" viewBox="0 0 17 17"><path d="M4.6 0.8 H16 V12 H4.6 Z" fill="none" stroke="#dcdcdc" stroke-width="1.4"/><path d="M1 4.4 V16 H12.4" fill="none" stroke="#dcdcdc" stroke-width="1.4"/></svg>
<svg style="left:557px;top:370px" width="18" height="11" viewBox="0 0 18 11"><path d="M1 1.4 L9 9.4 L17 1.4" fill="none" stroke="#dcdcdc" stroke-width="1.5"/></svg>
<svg style="left:586.5px;top:370px" width="18" height="11" viewBox="0 0 18 11"><path d="M1 9.6 L9 1.6 L17 9.6" fill="none" stroke="#dcdcdc" stroke-width="1.5"/></svg>
<svg style="left:615px;top:368.5px" width="18" height="14" viewBox="0 0 18 14"><path d="M0.5 2.4 H17.5 M0.5 7 H17.5 M0.5 11.6 H17.5" stroke="#dcdcdc" stroke-width="1.3"/><path d="M11.6 0.4 V4.4 M5.4 5 V9 M11.6 9.6 V13.6" stroke="#dcdcdc" stroke-width="1.8"/></svg>
<svg style="left:641.5px;top:372.5px" width="8.5" height="5.5" viewBox="0 0 8.5 5.5"><path d="M0.7 0.8 L4.25 4.4 L7.8 0.8" fill="none" stroke="#bdbdbd" stroke-width="1"/></svg>
<svg style="left:663px;top:367px" width="15" height="17" viewBox="0 0 15 17"><path d="M0.8 3.4 H14.2 M5 3 V1 H10 V3" fill="none" stroke="#dcdcdc" stroke-width="1.4"/><path d="M2 5.2 H13 V15.4 A1 1 0 0 1 12 16.4 H3 A1 1 0 0 1 2 15.4 Z" fill="#dcdcdc"/></svg>
<div class="panel" style="left:477px;top:390px;width:207.6px;height:48px;"></div>
<svg style="left:479.5px;top:392.0px" width="13" height="13" viewBox="0 0 13 13"><circle cx="6.5" cy="6.5" r="5.8" fill="none" stroke="#dcdcdc" stroke-width="1"/><rect x="3.8" y="6" width="5.4" height="3.8" fill="#dcdcdc"/><path d="M4.8 6 V5 A1.7 1.7 0 0 1 8.2 5" fill="none" stroke="#dcdcdc" stroke-width="1"/></svg>
<div class="t" style="left:500.8px;top:391px;font-size:11.1px;letter-spacing:-.1px;color:#e2e2e2;">ブラシプリセット</div>
<svg style="left:644px;top:392.9px" width="12" height="11" viewBox="0 0 12 11"><path d="M3.6 0.6 H11.4 V6.4 H3.6 Z" fill="none" stroke="#dcdcdc" stroke-width="1.1"/><path d="M0.6 4.4 H7.4 V10.4 H0.6 Z" fill="#3e3e3e" stroke="#dcdcdc" stroke-width="1.1"/></svg>
<svg style="left:668px;top:393.7px" width="9" height="9" viewBox="0 0 9 9"><path d="M0.8 0.8 L8.2 8.2 M8.2 0.8 L0.8 8.2" stroke="#dcdcdc" stroke-width="1.3"/></svg>
<div class="abs" style="left:480.2px;top:410.3px;width:8.2px;height:23.6px;background:#dedede;overflow:hidden;"><svg style="left:0;top:0" width="9" height="24"><path d="M0 8.4 L8.2 0.4 V1.8 L0 9.8 Z" fill="#444"/><path d="M0 4 L4 0 H5.4 L0 5.4 Z" fill="#9a9a9a"/><path d="M0 19.4 C3 19 6 17.4 8.2 14.8 V19 C6 20.6 3 21.6 0 21.6 Z" fill="#161616"/></svg></div>
<div class="abs" style="left:488.6px;top:409.2px;width:25px;height:26px;background:#8fc3e9;border:3px solid #5580aa;border-radius:2px;box-sizing:border-box;overflow:hidden;"><svg style="left:0;top:0" width="19" height="20"><path d="M18.6 0.4 L19.6 1.6 L10.4 10 L9 8.8 Z" fill="#27345c"/><path d="M12 5.6 L13.6 7.2 L8 11.6 L6.6 11.2 Z" fill="#1e2a58"/><path d="M13 17.6 C15.6 16.8 17.6 15.4 19 13.6 V18 C17 19 15 19.2 13 18.6 Z" fill="#24386a"/><path d="M5 15.6 C8 17.6 11 17.8 14 17" fill="none" stroke="#79acd6" stroke-width="1.2"/></svg></div>
<div class="abs" style="left:516.2px;top:410px;width:23.4px;height:24px;background:#353535;border:1px solid #555;border-radius:2px;box-sizing:border-box;"></div>
<svg style="left:524px;top:416.5px" width="7" height="11" viewBox="0 0 7 11"><path d="M5.8 0.8 L1.2 5.5 L5.8 10.2" fill="none" stroke="#c8c8c8" stroke-width="1.1"/></svg>
<div class="abs" style="left:541.4px;top:410px;width:23.6px;height:24px;background:#353535;border:1px solid #555;border-radius:2px;box-sizing:border-box;"></div>
<svg style="left:550.5px;top:416.5px" width="7" height="11" viewBox="0 0 7 11"><path d="M1.2 0.8 L5.8 5.5 L1.2 10.2" fill="none" stroke="#c8c8c8" stroke-width="1.1"/></svg>
<div class="abs" style="left:567.6px;top:410px;width:21.8px;height:24px;background:#353535;border:1px solid #555;border-radius:2px;box-sizing:border-box;"></div>
<svg style="left:576.5px;top:419.5px" width="9" height="6" viewBox="0 0 9 6"><path d="M0.7 0.8 L4.5 4.9 L8.3 0.8" fill="none" stroke="#c8c8c8" stroke-width="1.1"/></svg>
<div class="abs" style="left:572px;top:419px;width:1.2px;height:1.2px;background:#ccc;"></div>
<div class="abs" style="left:591.8px;top:410px;width:21.4px;height:24px;background:#353535;border:1px solid #555;border-radius:2px;box-sizing:border-box;"></div>
<div class="t" style="left:592.6px;top:415px;font-size:12px;color:#f2f2f2;letter-spacing:-1.3px;">タグ</div>
<svg style="left:619px;top:415px" width="13" height="13" viewBox="0 0 13 13"><rect x="0.7" y="0.7" width="11.8" height="11.8" fill="none" stroke="#dcdcdc" stroke-width="1.2"/><path d="M6.4 1.4 V6" stroke="#dcdcdc" stroke-width="1.5" stroke-dasharray="1.1 0.8"/></svg>
<div class="abs" style="left:637.2px;top:410px;width:19.8px;height:24.4px;background:#393939;border:1px solid #585858;border-radius:3px;box-sizing:border-box;"></div>
<div class="abs" style="left:664.2px;top:415px;width:13.2px;height:13.2px;background:#415a75;border:1px solid #587a9c;border-radius:2px;box-sizing:border-box;"></div>
<svg style="left:666px;top:417.2px" width="10" height="9" viewBox="0 0 10 9"><path d="M1 4.4 L3.8 7.2 L9 1.4" fill="none" stroke="#f4f4f4" stroke-width="1.7"/></svg>

<!--STATUS-->
<div class="abs" style="left:457px;top:420px;width:19px;height:18.5px;border-right:1px solid #5c5c5c;border-bottom:1px solid #5c5c5c;border-bottom-right-radius:3px;box-sizing:border-box;-webkit-mask-image:linear-gradient(135deg,transparent 30%,#000 75%);mask-image:linear-gradient(135deg,transparent 30%,#000 75%);"></div>
<svg style="left:11px;top:450px" width="12" height="12" viewBox="0 0 12 12"><rect x="0.6" y="0.6" width="10.8" height="10.8" fill="none" stroke="#d0d0d0" stroke-width="1"/><circle cx="6" cy="6" r="3.4" fill="none" stroke="#bdbdbd" stroke-width="1" stroke-dasharray="1.2 1"/></svg>
<div class="abs" style="left:273px;top:443px;width:94px;height:27px;background:#333;border:1px solid #505050;border-radius:2px;box-sizing:border-box;overflow:hidden;"><div class="t" style="left:1.5px;top:5px;font-size:12.4px;letter-spacing:.1px;color:#dedede;">0 x 2,000 (32.0 MiB)</div></div>
<div class="abs" style="left:375.5px;top:444px;width:25px;height:25px;border-radius:50%;background:#2f2f2f;box-shadow:0 0 0 .6px #3c3c3c;"></div>
<svg style="left:384px;top:452px" width="20" height="9" viewBox="0 0 20 9"><path d="M4 4.5 H16" stroke="#f0f0f0" stroke-width="1.2"/><circle cx="4" cy="4.5" r="1.4" fill="#f4f4f4"/><circle cx="16.4" cy="4.5" r="1.3" fill="#f4f4f4"/></svg>
<div class="t" style="left:410px;top:448px;font-size:12.4px;color:#dedede;">0.00°</div>
<div class="t" style="left:535px;top:448.5px;font-size:12.4px;color:#dedede;">18.8%</div>
<div class="abs" style="left:585px;top:453.5px;width:61px;height:5px;border-radius:2.5px;background:#3a3a3a;box-shadow:0 0 0 .6px #585858;"></div>
<div class="abs" style="left:585px;top:453.5px;width:10px;height:5px;border-radius:2.5px 0 0 2.5px;background:#557a9f;"></div>
<div class="abs" style="left:590.5px;top:449px;width:14px;height:14px;border-radius:50%;background:#353535;box-shadow:0 0 0 1px #6a6a6a;"></div>
<svg style="left:651px;top:451px" width="15" height="13" viewBox="0 0 15 13"><rect x="0.8" y="0.8" width="13.4" height="7.6" fill="none" stroke="#d8d8d8" stroke-width="1.2"/><path d="M7.5 8.4 V11 M3.6 11.6 H11.4" stroke="#d8d8d8" stroke-width="1.2"/><circle cx="7.5" cy="4.6" r="0.9" fill="#d8d8d8"/></svg>

</div>
</body>
</html>
